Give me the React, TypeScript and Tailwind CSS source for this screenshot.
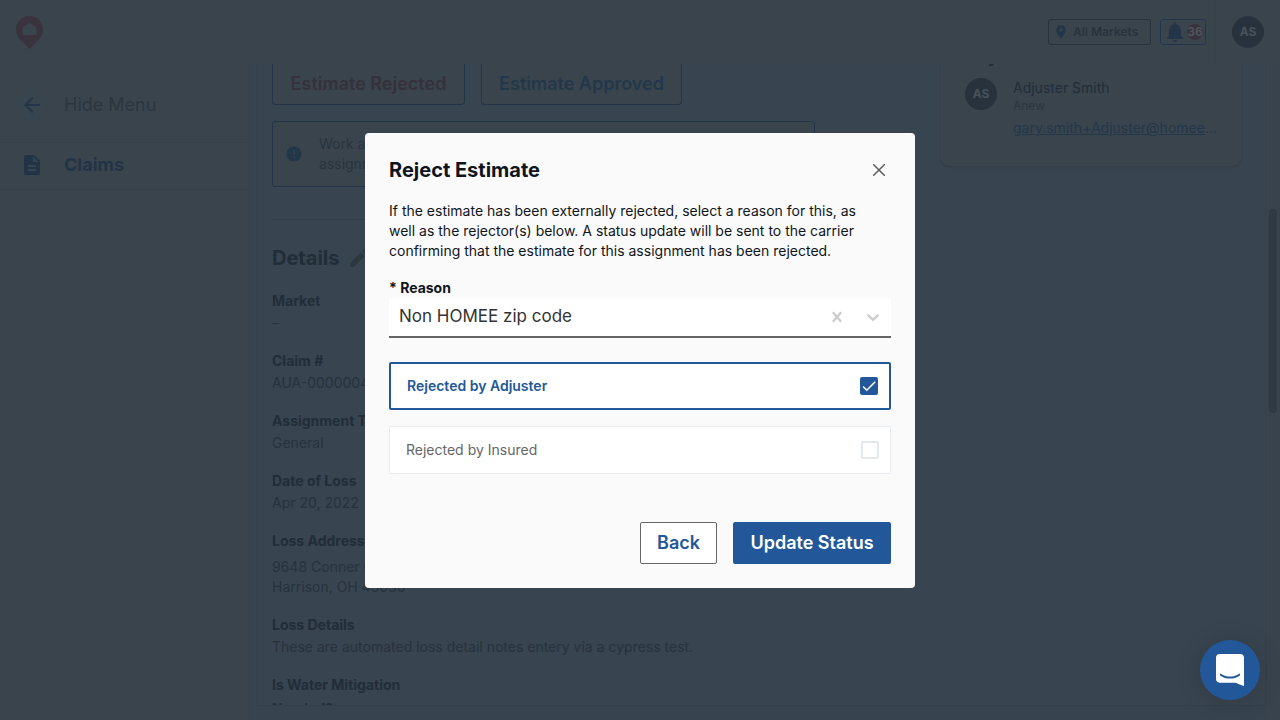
import { useState } from "react";
import {
  MdArrowBack,
  MdCheck,
  MdDescription,
  MdEdit,
  MdError,
  MdNotifications,
  MdPlace,
} from "react-icons/md";

const details = [
  { label: "Market", value: "–" },
  { label: "Claim #", value: "AUA-000000456" },
  { label: "Assignment Type", value: "General" },
  { label: "Date of Loss", value: "Apr 20, 2022" },
];

function Logo() {
  return (
    <svg viewBox="0 0 27 33" className="h-[33px] w-[27px]" aria-label="Home">
      <path
        d="M13.500 0C6 0 0 6 0 13.400c0 4.600 2.300 7.700 5 11L13.500 33 22 24.400c2.700-3.300 5-6.400 5-11C27 6 21 0 13.500 0z"
        fill="#38333c"
      />
      <path d="M13.500 7l7 4.200V19H6.500v-7.800z" fill="#3a444d" />
    </svg>
  );
}

function Header() {
  return (
    <header className="flex h-16 shrink-0 items-center justify-between bg-[#3a444d] pl-4">
      <Logo />
      <div className="flex h-full items-center">
        <button className="flex h-[26px] min-w-[103px] items-center gap-1 rounded-[3px] border border-[#26323d] pr-2 pl-1 text-xs font-semibold text-[#28333d]">
          <MdPlace size={16} color="#233547" />
          All Markets
        </button>
        <button
          aria-label="Notifications, 36 unread"
          className="mr-[9px] ml-[9px] flex h-[26px] items-center rounded-[3px] border border-[#22364b] px-0.5"
        >
          <MdNotifications size={24} color="#233547" />
          <span className="flex size-4 items-center justify-center rounded-full bg-[#38333c] text-xs font-bold text-[#4b545d]">
            36
          </span>
        </button>
        <div className="flex h-full items-center border-l border-[#36414b] px-4">
          <Avatar />
        </div>
      </div>
    </header>
  );
}

function Avatar() {
  return (
    <div className="flex size-8 shrink-0 items-center justify-center rounded-full bg-[#28323c] text-xs font-bold text-[#47515a]">
      AS
    </div>
  );
}

function Sidebar() {
  return (
    <nav className="w-[249px] shrink-0 border-r border-[#36424d] bg-[#3a444d] pt-[7px] text-lg">
      <button className="flex h-[69px] w-full items-center gap-4 border-b border-[#35404a] pl-4 text-[#2b3640]">
        <span className="flex size-8 items-center justify-center rounded-full bg-[#38444e]">
          <MdArrowBack size={24} color="#233547" />
        </span>
        Hide Menu
      </button>
      <a
        href="#claims"
        className="flex h-[50px] items-center gap-4 border-b border-[#35404a] pl-4 font-bold text-[#223345]"
      >
        <span className="flex size-8 items-center justify-center">
          <MdDescription size={24} color="#223345" />
        </span>
        Claims
      </a>
    </nav>
  );
}

function Detail({ label, children, spaced = false }: { label: string; children: React.ReactNode; spaced?: boolean }) {
  return (
    <div className="mb-4">
      <dt className="w-40 leading-6 font-bold text-[#212d39]">{label}</dt>
      <dd className={spaced ? "mt-1 leading-5" : "leading-5"}>{children}</dd>
    </div>
  );
}

function Page() {
  return (
    <main className="mb-[14px] ml-[9px] flex min-w-0 flex-1 items-start justify-between overflow-hidden border-b border-[#333f4a] bg-[#38444f] pr-6 pl-[14px]">
      <section className="w-[543px] shrink-0">
        <div className="flex gap-4 text-lg font-semibold">
          <button className="h-[41px] min-w-[193px] rounded-b-sm border border-t-0 border-[#223445] bg-[#3a444d] px-4 text-[#35303a]">
            Estimate Rejected
          </button>
          <button className="h-[41px] min-w-[201px] rounded-b-sm border border-t-0 border-[#223445] bg-[#3a444d] px-4 text-[#23374b]">
            Estimate Approved
          </button>
        </div>
        <div className="mt-4 flex h-[66px] items-center gap-4 rounded-[3px] border border-[#223445] bg-[#3a444d] px-3 leading-5 text-[#29343e]">
          <MdError size={18} color="#23374b" className="shrink-0" />
          <p>
            Work and
            <br />
            assignment
          </p>
        </div>
        <hr className="mt-8 border-[#333f4a]" />
        <h2 className="mt-[26px] mb-[19px] flex h-6 items-center gap-2 text-xl font-bold text-[#212d39]">
          Details
          <MdEdit size={24} color="#2c3741" />
        </h2>
        <dl className="text-[#27323d]">
          {details.map((item) => (
            <Detail key={item.label} label={item.label}>
              {item.value}
            </Detail>
          ))}
          <Detail label="Loss Address" spaced>
            9648 Conner Ct
            <br />
            Harrison, OH 45030
          </Detail>
          <Detail label="Loss Details">
            These are automated loss detail notes entery via a cypress test.
          </Detail>
          <Detail label="Is Water Mitigation Needed?">Yes</Detail>
        </dl>
      </section>
      <aside className="w-[300px] shrink-0 rounded-b-lg bg-[#3a444d] px-6 pb-7 shadow-sm">
        <div className="flex h-[3px] items-end overflow-hidden">
          <h2 className="shrink-0 text-lg leading-[22px] font-bold text-[#212d39]">Key Contact</h2>
        </div>
        <div className="mt-[11px] flex gap-4 leading-5">
          <Avatar />
          <div className="min-w-0 flex-1">
            <p className="text-[#212d39]">Adjuster Smith</p>
            <p className="text-xs leading-4 text-[#2b3640]">Anew</p>
            <a href="mailto:gary.smith+Adjuster@homee.com" className="mt-1 block truncate text-[#23374b] underline">
              gary.smith+Adjuster@homee.com
            </a>
          </div>
        </div>
      </aside>
    </main>
  );
}

function RejectorOption({ label, checked, onChange }: { label: string; checked: boolean; onChange: () => void }) {
  return (
    <label
      className={
        checked
          ? "flex h-12 items-center justify-between rounded-xs border-2 border-[#22589a] bg-white pr-[11px] pl-4 font-semibold text-[#22589a]"
          : "flex h-12 items-center justify-between rounded-xs border border-[#e8ecf1] bg-white pr-[11px] pl-4 text-[#666666]"
      }
    >
      {label}
      <span className="grid place-items-center">
        <input
          type="checkbox"
          checked={checked}
          onChange={onChange}
          className="col-start-1 row-start-1 size-[18px] appearance-none rounded-xs border-2 border-[#e3e8ed] bg-white checked:border-[#22589a] checked:bg-[#22589a]"
        />
        {checked && <MdCheck size={18} color="#ffffff" className="pointer-events-none col-start-1 row-start-1" />}
      </span>
    </label>
  );
}

function RejectDialog() {
  const [reason, setReason] = useState("zip");
  const [adjuster, setAdjuster] = useState(true);
  const [insured, setInsured] = useState(false);

  return (
    <div className="fixed inset-0 flex items-center justify-center">
      <div
        role="dialog"
        aria-modal="true"
        aria-labelledby="reject-title"
        className="w-[550px] rounded-sm bg-[#fafafa] p-6 text-[#0f151c]"
      >
        <div className="flex h-[26px] items-center justify-between">
          <h1 id="reject-title" className="text-xl font-bold">
            Reject Estimate
          </h1>
          <button aria-label="Close" className="flex size-6 items-center justify-center">
            <svg viewBox="0 0 12 12" className="size-3" stroke="#5c5c5c" strokeWidth="1.500" strokeLinecap="round">
              <path d="M.7.7l10.600 10.600M11.300.7L.7 11.300" />
            </svg>
          </button>
        </div>
        <p className="mt-[18px] leading-5">
          If the estimate has been externally rejected, select a reason for this, as
          <br />
          well as the rejector(s) below. A status update will be sent to the carrier
          <br />
          confirming that the estimate for this assignment has been rejected.
        </p>
        <label htmlFor="reason" className="mt-[17px] block leading-5 font-bold">
          * Reason
        </label>
        <div className="flex h-10 items-center border-b-2 border-[#666666] bg-white">
          <select
            id="reason"
            value={reason}
            onChange={(e) => setReason(e.target.value)}
            className="h-full min-w-0 flex-1 appearance-none bg-white pl-[10px] text-[17px] text-[#333333]"
          >
            <option value="" />
            <option value="zip">Non HOMEE zip code</option>
          </select>
          <button aria-label="Clear reason" onClick={() => setReason("")} className="flex w-9 justify-center">
            <svg viewBox="0 0 20 20" className="size-5" fill="#cccccc">
              <path d="M14.348 14.849c-0.469 0.469-1.229 0.469-1.697 0l-2.651-3.030-2.651 3.029c-0.469 0.469-1.229 0.469-1.697 0-0.469-0.469-0.469-1.229 0-1.697l2.758-3.150-2.759-3.152c-0.469-0.469-0.469-1.228 0-1.697s1.228-0.469 1.697 0l2.652 3.031 2.651-3.031c0.469-0.469 1.228-0.469 1.697 0s0.469 1.229 0 1.697l-2.758 3.152 2.758 3.150c0.469 0.469 0.469 1.229 0 1.698z" />
            </svg>
          </button>
          <span className="flex w-9 justify-center">
            <svg viewBox="0 0 20 20" className="size-5" fill="#cccccc">
              <path d="M4.516 7.548c0.436-0.446 1.043-0.481 1.576 0l3.908 3.747 3.908-3.747c0.533-0.481 1.141-0.446 1.574 0 0.436 0.445 0.408 1.197 0 1.615-0.406 0.418-4.695 4.502-4.695 4.502-0.217 0.223-0.502 0.335-0.787 0.335s-0.570-0.112-0.789-0.335c0 0-4.287-4.084-4.695-4.502s-0.436-1.170 0-1.615z" />
            </svg>
          </span>
        </div>
        <div className="mt-6 flex flex-col gap-4">
          <RejectorOption label="Rejected by Adjuster" checked={adjuster} onChange={() => setAdjuster(!adjuster)} />
          <RejectorOption label="Rejected by Insured" checked={insured} onChange={() => setInsured(!insured)} />
        </div>
        <div className="mt-12 flex justify-end gap-4 text-lg font-semibold">
          <button className="h-[42px] rounded-xs border border-[#666666] bg-white px-4 text-[#22589a]">Back</button>
          <button className="h-[42px] min-w-[158px] rounded-xs bg-[#22589a] px-4 text-white">Update Status</button>
        </div>
      </div>
    </div>
  );
}

export default function App() {
  return (
    <div className="flex h-screen flex-col overflow-hidden bg-[#37434e] font-['Inter','Noto_Sans',sans-serif] text-sm">
      <Header />
      <div className="flex min-h-0 flex-1">
        <Sidebar />
        <Page />
        <div className="w-[15px] shrink-0 border-l border-[#34404b] bg-[#38434d] pt-[145px] pl-[3px]">
          <div className="h-[204px] w-2 rounded-full bg-[#2f3a44]" />
        </div>
      </div>
      <RejectDialog />
      <button
        aria-label="Open chat"
        className="fixed right-5 bottom-5 flex size-[60px] items-center justify-center rounded-full bg-[#22589a] shadow-[0_2px_24px_rgba(0,0,0,0.15)]"
      >
        <svg viewBox="0 0 28 32" className="h-8 w-7" fill="#ffffff">
          <path d="M28 32s-4.714-1.855-8.527-3.340H3.437C1.540 28.660 0 27.026 0 25.013V3.644C0 1.633 1.540 0 3.437 0h21.125c1.898 0 3.437 1.632 3.437 3.645v18.404H28V32zm-4.139-11.982a.88.88 0 00-1.292-.105c-.03.026-3.015 2.681-8.570 2.681-5.486 0-8.517-2.636-8.571-2.684a.88.88 0 00-1.290.107 1.010 1.010 0 00-.219.708.992.992 0 00.318.664c.142.128 3.537 3.150 9.762 3.150 6.226 0 9.621-3.022 9.763-3.150a.992.992 0 00.317-.664 1.010 1.010 0 00-.218-.707z" />
        </svg>
      </button>
    </div>
  );
}
